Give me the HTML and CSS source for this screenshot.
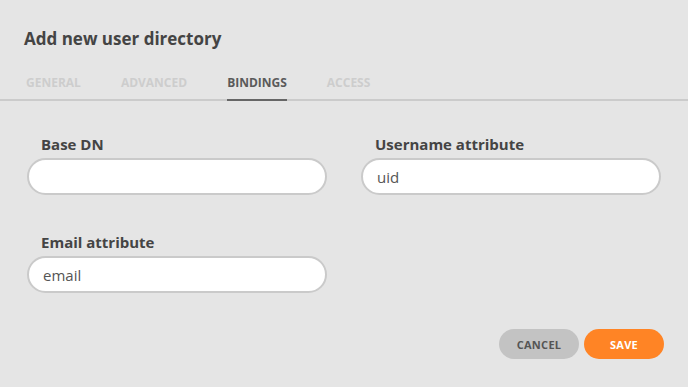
FILE: index.html
```html
<!DOCTYPE html>
<html lang="en">
<head>
    <meta charset="UTF-8">
    <title>Add new user directory</title>
    <link rel="stylesheet" href="styles.css">
</head>
<body>
    <div class="dialog">
        <h1>Add new user directory</h1>

        <div class="tabs">
            <span class="tab">General</span>
            <span class="tab">Advanced</span>
            <span class="tab active">Bindings</span>
            <span class="tab">Access</span>
        </div>

        <form class="fields" onsubmit="event.preventDefault();">
            <div class="field">
                <label for="baseDn">Base DN</label>
                <input type="text" id="baseDn" value="">
            </div>
            <div class="field">
                <label for="userAttr">Username attribute</label>
                <input type="text" id="userAttr" value="uid">
            </div>
            <div class="field">
                <label for="emailAttr">Email attribute</label>
                <input type="text" id="emailAttr" value="email">
            </div>
        </form>

        <div class="actions">
            <button class="btn cancel">Cancel</button>
            <button class="btn save">Save</button>
        </div>
    </div>
</body>
</html>
```

FILE: styles.css
```css
* {
    margin: 0;
    padding: 0;
    box-sizing: border-box;
    font-family: 'Open Sans', 'Segoe UI', sans-serif;
}

body {
    background-color: #e5e5e5;
    width: 688px;
    height: 387px;
    overflow: hidden;
}

.dialog {
    padding-top: 27px;
}

h1 {
    margin: 0 24px;
    font-size: 17px;
    line-height: 24px;
    font-weight: 700;
    color: #444;
}

.tabs {
    display: flex;
    gap: 40px;
    margin-top: 24px;
    padding-left: 26px;
    border-bottom: 2px solid #cbcbcb;
}

.tab {
    font-size: 12px;
    line-height: 16px;
    font-weight: 700;
    text-transform: uppercase;
    color: #cdcdcd;
    padding-bottom: 8px;
    border-bottom: 2px solid transparent;
    margin-bottom: -2px;
}

.tab.active {
    color: #5a5a5a;
    border-bottom-color: #666;
}

.fields {
    display: grid;
    grid-template-columns: 300px 300px;
    column-gap: 34px;
    row-gap: 37px;
    padding: 33px 0 0 27px;
}

.field label {
    display: block;
    padding-left: 14px;
    font-size: 15px;
    line-height: 20px;
    font-weight: 700;
    color: #444;
    margin-bottom: 4px;
}

.field input {
    width: 300px;
    height: 37px;
    padding: 0 14px;
    border: 2px solid #cacaca;
    border-radius: 19px;
    background: #fff;
    font-size: 15px;
    color: #555;
    outline: none;
}

.actions {
    display: flex;
    justify-content: flex-end;
    gap: 5px;
    padding: 36px 24px 0 0;
}

.btn {
    width: 80px;
    height: 30px;
    border: none;
    border-radius: 15px;
    font-size: 11px;
    font-weight: 700;
    letter-spacing: 0.3px;
    text-transform: uppercase;
    cursor: pointer;
}

.cancel {
    background: #c3c3c3;
    color: #555;
}

.save {
    background: #ff8425;
    color: #fff;
}
```
